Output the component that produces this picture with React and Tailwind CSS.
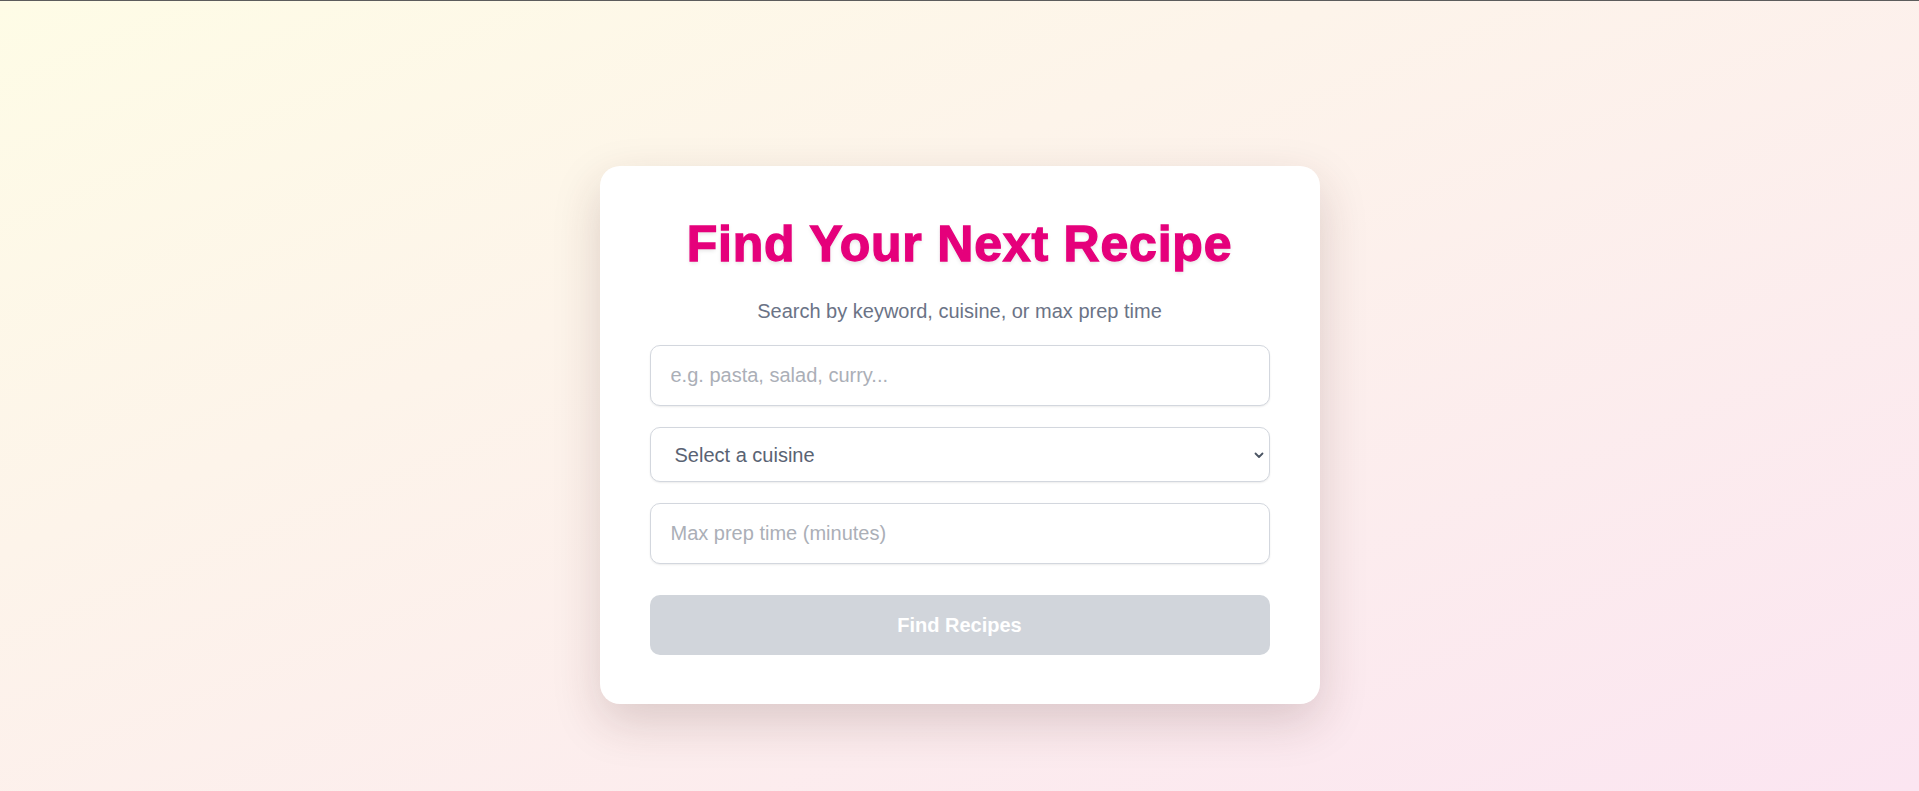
import React from "react";

export default function App() {
  return (
    <div className="min-h-[791px] w-full bg-gradient-to-br from-[#fefce6] to-[#fbe5f1] font-['Liberation_Sans',Arial,sans-serif]">
      <div className="h-px w-full bg-[#5c5c5c]" />
      <div className="flex justify-center pt-[165px] pb-[85px]">
        <div className="w-[720px] rounded-[20px] bg-white px-[50px] pt-[50px] pb-[49px] shadow-[0_18px_48px_rgba(70,35,35,0.18)]">
          <h1 className="text-center text-[50px] font-bold leading-[56px] tracking-[0.8px] text-[#e5007b] [-webkit-text-stroke:1.3px_#e5007b] [text-shadow:0_2px_4px_rgba(0,0,0,0.12)]">
            Find Your Next Recipe
          </h1>
          <p className="mt-[27px] text-center text-[20px] leading-[24px] text-[#6b7386]">
            Search by keyword, cuisine, or max prep time
          </p>
          <div className="mt-[22px] flex flex-col gap-[21px]">
            <input
              type="text"
              placeholder="e.g. pasta, salad, curry..."
              className="h-[61px] w-full rounded-[10px] border border-[#d3d7de] bg-white px-[20px] text-[20px] text-gray-700 shadow-[0_1px_2px_rgba(0,0,0,0.08)] outline-none placeholder:text-[#abafb7]"
            />
            <div className="relative">
              <select
                defaultValue=""
                className="h-[55px] w-full appearance-none rounded-[10px] border border-[#d3d7de] bg-white pl-[24px] pr-[40px] text-[20px] text-[#5a6373] shadow-[0_1px_2px_rgba(0,0,0,0.08)] outline-none"
              >
                <option value="">Select a cuisine</option>
                <option value="italian">Italian</option>
                <option value="mexican">Mexican</option>
                <option value="indian">Indian</option>
              </select>
              <svg
                className="pointer-events-none absolute right-[5px] top-1/2 -translate-y-1/2"
                width="12"
                height="12"
                viewBox="0 0 12 12"
                fill="none"
              >
                <path d="M2.5 4.5L6 8L9.5 4.5" stroke="#4b5563" strokeWidth="1.8" strokeLinecap="round" strokeLinejoin="round" />
              </svg>
            </div>
            <input
              type="number"
              placeholder="Max prep time (minutes)"
              className="h-[61px] w-full rounded-[10px] border border-[#d3d7de] bg-white px-[20px] text-[20px] text-gray-700 shadow-[0_1px_2px_rgba(0,0,0,0.08)] outline-none placeholder:text-[#abafb7] [appearance:textfield]"
            />
          </div>
          <button
            type="button"
            disabled
            className="mt-[31px] h-[60px] w-full rounded-[10px] bg-[#d1d5db] text-[20px] font-bold text-white"
          >
            Find Recipes
          </button>
        </div>
      </div>
    </div>
  );
}
